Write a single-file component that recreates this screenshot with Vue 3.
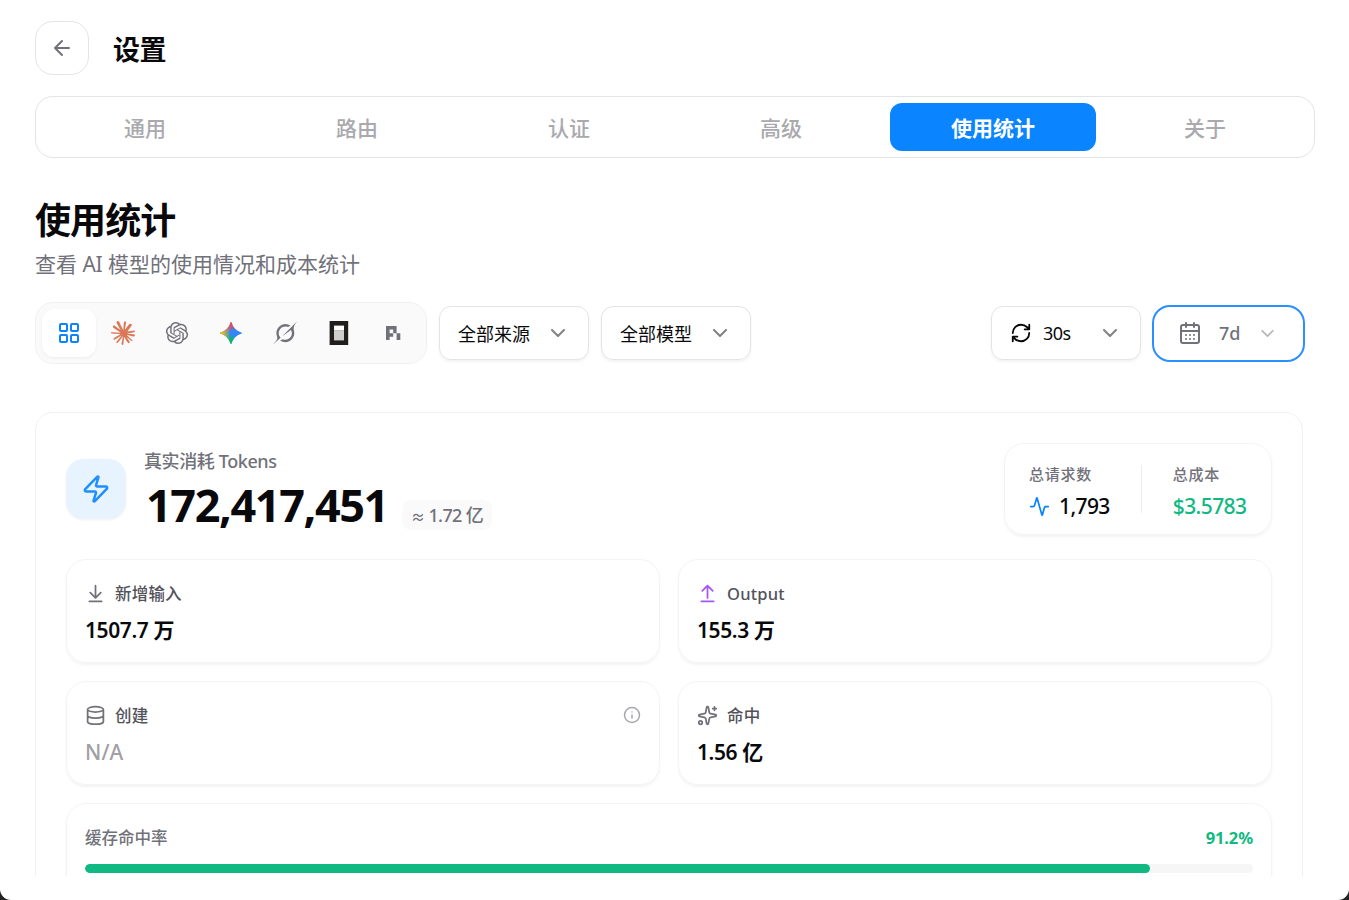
<template>
  <div class="window">
    <header class="header">
      <button class="back">
        <svg class="icon" width="24" height="24" viewBox="0 0 24 24"><path d="m12 19-7-7 7-7M19 12H5" /></svg>
      </button>
      <h1>设置</h1>
    </header>

    <nav class="tabs">
      <button v-for="tab in tabs" :key="tab" class="tab" :class="{ active: tab === activeTab }" @click="activeTab = tab">{{ tab }}</button>
    </nav>

    <main class="content">
      <h2>使用统计</h2>
      <p class="subtitle">查看 <span class="ai">AI</span> 模型的使用情况和成本统计</p>

      <div class="toolbar">
        <div class="apps">
          <button class="app selected">
            <svg class="icon" width="24" height="24" viewBox="0 0 24 24">
              <rect x="3" y="3" width="7" height="7" rx="1" /><rect x="14" y="3" width="7" height="7" rx="1" />
              <rect x="14" y="14" width="7" height="7" rx="1" /><rect x="3" y="14" width="7" height="7" rx="1" />
            </svg>
          </button>
          <button class="app claude">
            <svg width="24" height="24" viewBox="0 0 24 24" fill="currentColor"><path d="M4.709 15.955l4.72-2.647.08-.23-.08-.128H9.2l-.79-.048-2.698-.073-2.339-.097-2.266-.122-.571-.121L0 11.784l.055-.352.48-.321.686.06 1.52.103 2.278.158 1.652.097 2.449.255h.389l.055-.157-.134-.098-.103-.097-2.358-1.596-2.552-1.688-1.336-.972-.724-.491-.364-.462-.158-1.008.656-.722.881.06.225.061.893.686 1.908 1.476 2.491 1.833.365.304.145-.103.019-.073-.164-.274-1.355-2.446-1.446-2.49-.644-1.032-.17-.619a2.97 2.97 0 01-.104-.729L6.283.134 6.696 0l.996.134.42.364.62 1.414 1.002 2.229 1.555 3.03.456.898.243.832.091.255h.158V9.01l.128-1.706.237-2.095.23-2.695.08-.76.376-.91.747-.492.584.28.48.685-.067.444-.286 1.851-.559 2.903-.364 1.942h.212l.243-.242.985-1.306 1.652-2.064.73-.82.85-.904.547-.431h1.033l.76 1.129-.34 1.166-1.064 1.347-.881 1.142-1.264 1.7-.79 1.36.073.11.188-.02 2.856-.606 1.543-.28 1.841-.315.833.388.091.395-.328.807-1.969.486-2.309.462-3.439.813-.042.03.049.061 1.549.146.662.036h1.622l3.02.225.79.522.474.638-.079.485-1.215.62-1.64-.389-3.829-.91-1.312-.329h-.182v.11l1.093 1.068 2.006 1.81 2.509 2.33.127.578-.322.455-.34-.049-2.205-1.657-.851-.747-1.926-1.62h-.128v.17l.444.649 2.345 3.521.122 1.08-.17.353-.608.213-.668-.122-1.374-1.925-1.415-2.167-1.143-1.943-.14.08-.674 7.254-.316.37-.729.28-.607-.461-.322-.747.322-1.476.389-1.924.315-1.53.286-1.9.17-.632-.012-.042-.14.018-1.434 1.967-2.18 2.945-1.726 1.845-.414.164-.717-.37.067-.662.401-.589 2.388-3.036 1.44-1.882.93-1.086-.006-.158h-.055L4.132 18.56l-1.13.146-.487-.456.061-.746.231-.243 1.908-1.312z" /></svg>
          </button>
          <button class="app">
            <svg width="24" height="24" viewBox="0 0 24 24" fill="currentColor"><path d="M21.55 10.004a5.416 5.416 0 00-.478-4.501c-1.217-2.09-3.662-3.166-6.05-2.66A5.59 5.59 0 0010.831 1C8.39.995 6.224 2.546 5.473 4.838A5.553 5.553 0 001.76 7.496a5.487 5.487 0 00.691 6.5 5.416 5.416 0 00.477 4.502c1.217 2.09 3.662 3.165 6.05 2.66A5.586 5.586 0 0013.168 23c2.443.006 4.61-1.546 5.361-3.84a5.553 5.553 0 003.715-2.66 5.488 5.488 0 00-.693-6.497v.001zm-8.381 11.558a4.199 4.199 0 01-2.675-.954c.034-.018.093-.05.132-.074l4.44-2.53a.71.71 0 00.364-.623v-6.176l1.877 1.069c.02.01.033.029.036.05v5.115c-.003 2.274-1.87 4.118-4.174 4.123zM4.192 17.78a4.059 4.059 0 01-.498-2.763c.032.02.09.055.131.078l4.44 2.53c.225.13.504.13.73 0l5.42-3.088v2.138a.068.068 0 01-.027.057L9.9 19.288c-1.999 1.136-4.552.46-5.707-1.51h-.001zM3.023 8.216A4.15 4.15 0 015.198 6.41l-.002.151v5.06a.711.711 0 00.364.624l5.42 3.087-1.876 1.07a.067.067 0 01-.063.005l-4.489-2.559c-1.995-1.14-2.679-3.658-1.53-5.63h.001zm15.417 3.54l-5.42-3.088L14.896 7.6a.067.067 0 01.063-.006l4.489 2.557c1.998 1.14 2.683 3.662 1.529 5.633a4.163 4.163 0 01-2.174 1.807V12.38a.71.71 0 00-.363-.623zm1.867-2.773a6.04 6.04 0 00-.132-.078l-4.44-2.53a.731.731 0 00-.729 0l-5.42 3.088V7.325a.068.068 0 01.027-.057L14.1 4.713c2-1.137 4.555-.46 5.707 1.513.487.833.664 1.809.499 2.757h.001zm-11.741 3.81l-1.877-1.068a.065.065 0 01-.036-.051V6.559c.001-2.277 1.873-4.122 4.181-4.12.976 0 1.92.338 2.671.954-.034.018-.092.05-.131.073l-4.44 2.53a.71.71 0 00-.365.623l-.003 6.173v.002zm1.02-2.168L12 9.25l2.414 1.375v2.75L12 14.75l-2.415-1.375v-2.75z" /></svg>
          </button>
          <button class="app">
            <svg width="24" height="24" viewBox="0 0 24 24">
              <defs>
                <linearGradient id="gem-red" gradientUnits="userSpaceOnUse" x1="11" y1="2" x2="13" y2="10.5"><stop offset=".2" stop-color="#f94543" /><stop offset="1" stop-color="#f94543" stop-opacity="0" /></linearGradient>
                <linearGradient id="gem-yellow" gradientUnits="userSpaceOnUse" x1="1" y1="12" x2="11.5" y2="12"><stop offset=".2" stop-color="#fabc12" /><stop offset="1" stop-color="#fabc12" stop-opacity="0" /></linearGradient>
                <linearGradient id="gem-green" gradientUnits="userSpaceOnUse" x1="10" y1="21" x2="12.5" y2="12.5"><stop offset=".2" stop-color="#08b962" /><stop offset="1" stop-color="#08b962" stop-opacity="0" /></linearGradient>
              </defs>
              <path v-for="fill in geminiFills" :key="fill" :fill="fill" d="M20.616 10.835a14.147 14.147 0 01-4.45-3.001 14.111 14.111 0 01-3.678-6.452.503.503 0 00-.975 0 14.134 14.134 0 01-3.679 6.452 14.155 14.155 0 01-4.45 3.001c-.65.28-1.318.505-2.002.678a.502.502 0 000 .975c.684.172 1.35.397 2.002.677a14.147 14.147 0 014.45 3.001 14.112 14.112 0 013.679 6.453.502.502 0 00.975 0c.172-.685.397-1.351.677-2.003a14.145 14.145 0 013.001-4.45 14.113 14.113 0 016.453-3.678.503.503 0 000-.975 13.245 13.245 0 01-2.003-.678z" />
            </svg>
          </button>
          <button class="app">
            <svg width="24" height="24" viewBox="0 0 24 24" fill="currentColor"><path d="M9.27 15.29l7.978-5.897c.391-.29.95-.177 1.137.272.98 2.369.542 5.215-1.41 7.169-1.951 1.954-4.667 2.382-7.149 1.406l-2.711 1.257c3.889 2.661 8.611 2.003 11.562-.953 2.341-2.344 3.066-5.539 2.388-8.42l.006.007c-.983-4.232.242-5.924 2.75-9.383.06-.082.12-.164.179-.248l-3.301 3.305v-.01L9.267 15.292M7.623 16.723c-2.792-2.67-2.31-6.801.071-9.184 1.761-1.763 4.647-2.483 7.166-1.425l2.705-1.25a7.808 7.808 0 00-1.829-1A8.975 8.975 0 005.984 5.83c-2.533 2.536-3.33 6.436-1.962 9.764 1.022 2.487-.653 4.246-2.34 6.022-.599.63-1.199 1.259-1.682 1.925l7.62-6.815" /></svg>
          </button>
          <button class="app">
            <svg width="24" height="24" viewBox="0 0 24 24">
              <path fill="#211e1e" d="M2.6 0h18.6v24H2.6z" /><path fill="#fff" d="M7 4.6h10v5H7z" /><path fill="#cfcecd" d="M7 9.4h10v10H7z" />
            </svg>
          </button>
          <button class="app">
            <svg width="24" height="24" viewBox="0 0 24 24" fill="currentColor">
              <path fill-rule="evenodd" d="M5 5h10.6v7.2h-3.4v3.5H8.6v3.4H5zM8.6 8.5v3.7h3.6V8.5zM15.6 12.2h3.7v6.9h-3.7z" />
            </svg>
          </button>
        </div>

        <button v-for="name in ['全部来源', '全部模型']" :key="name" class="select">
          {{ name }}
          <svg class="icon faded" width="24" height="24" viewBox="0 0 24 24"><path d="m6 9 6 6 6-6" /></svg>
        </button>

        <div class="right">
          <button class="select">
            <span class="interval">
              <svg class="icon" width="22" height="22" viewBox="0 0 24 24"><path d="M3 12a9 9 0 0 1 9-9 9.75 9.75 0 0 1 6.74 2.74L21 8M21 3v5h-5M21 12a9 9 0 0 1-9 9 9.75 9.75 0 0 1-6.74-2.74L3 16M8 16H3v5" /></svg>
              30s
            </span>
            <svg class="icon faded" width="24" height="24" viewBox="0 0 24 24"><path d="m6 9 6 6 6-6" /></svg>
          </button>
          <button class="range">
            <svg class="icon" width="24" height="24" viewBox="0 0 24 24"><path d="M8 2v4M16 2v4M3 10h18M8 14h.01M12 14h.01M16 14h.01M8 18h.01M12 18h.01M16 18h.01" /><rect width="18" height="18" x="3" y="4" rx="2" /></svg>
            <span>7d</span>
            <svg class="icon faded" width="21" height="21" viewBox="0 0 24 24"><path d="m6 9 6 6 6-6" /></svg>
          </button>
        </div>
      </div>

      <section class="hero">
        <div class="hero-top">
          <div class="zap">
            <svg class="icon" width="30" height="30" viewBox="0 0 24 24"><path d="M4 14a1 1 0 0 1-.78-1.63l9.9-10.2a.5.5 0 0 1 .86.46l-1.92 6.02A1 1 0 0 0 13 10h7a1 1 0 0 1 .78 1.63l-9.9 10.2a.5.5 0 0 1-.86-.46l1.92-6.02A1 1 0 0 0 11 14z" /></svg>
          </div>
          <div class="total">
            <div class="total-label">真实消耗 Tokens</div>
            <div class="total-row">
              <span class="total-value">172,417,451</span>
              <span class="approx"><small>≈</small> 1.72 亿</span>
            </div>
          </div>
          <div class="summary">
            <div class="summary-item">
              <div class="summary-label">总请求数</div>
              <div class="summary-value">
                <svg class="icon" width="21" height="21" viewBox="0 0 24 24"><path d="M22 12h-2.48a2 2 0 0 0-1.93 1.46l-2.35 8.36a.25.25 0 0 1-.48 0L9.24 2.18a.25.25 0 0 0-.48 0l-2.35 8.36A2 2 0 0 1 4.49 12H2" /></svg>
                1,793
              </div>
            </div>
            <div class="divider"></div>
            <div class="summary-item">
              <div class="summary-label">总成本</div>
              <div class="summary-value cost">$3.5783</div>
            </div>
          </div>
        </div>

        <div class="stats">
          <div v-for="stat in stats" :key="stat.label" class="card">
            <div class="card-label">
              <svg class="icon" :class="stat.tone" width="21" height="21" viewBox="0 0 24 24"><path :d="stat.icon" /></svg>
              {{ stat.label }}
              <svg v-if="stat.info" class="icon info" width="18" height="18" viewBox="0 0 24 24"><circle cx="12" cy="12" r="10" /><path d="M12 16v-4M12 8h.01" /></svg>
            </div>
            <div class="card-value" :class="{ muted: stat.info }">{{ stat.value }}</div>
          </div>
        </div>

        <div class="card cache">
          <div class="cache-row">
            <span>缓存命中率</span>
            <span class="rate">{{ hitRate }}%</span>
          </div>
          <div class="track"><div class="fill" :style="{ width: hitRate + '%' }"></div></div>
        </div>
      </section>
    </main>
  </div>
</template>

<script setup>
import { ref } from 'vue';

const tabs = ['通用', '路由', '认证', '高级', '使用统计', '关于'];
const activeTab = ref('使用统计');
const hitRate = ref(91.2);

// base colour first, then the tinted arms of the star
const geminiFills = ['#3186ff', 'url(#gem-green)', 'url(#gem-red)', 'url(#gem-yellow)'];

const stats = [
  { label: '新增输入', value: '1507.7 万', icon: 'M12 17V3M6 11l6 6 6-6M19 21H5' },
  { label: 'Output', value: '155.3 万', tone: 'purple', icon: 'm18 9-6-6-6 6M12 3v14M5 21h14' },
  { label: '创建', value: 'N/A', info: true, icon: 'M3 5a9 3 0 1 0 18 0a9 3 0 1 0-18 0M3 5v14a9 3 0 0 0 18 0V5M3 12a9 3 0 0 0 18 0' },
  { label: '命中', value: '1.56 亿', icon: 'M11.017 2.814a1 1 0 0 1 1.966 0l1.051 5.558a2 2 0 0 0 1.594 1.594l5.558 1.051a1 1 0 0 1 0 1.966l-5.558 1.051a2 2 0 0 0-1.594 1.594l-1.051 5.558a1 1 0 0 1-1.966 0l-1.051-5.558a2 2 0 0 0-1.594-1.594l-5.558-1.051a1 1 0 0 1 0-1.966l5.558-1.051a2 2 0 0 0 1.594-1.594zM20 2v4M22 4h-4M2 20a2 2 0 1 0 4 0a2 2 0 1 0-4 0' },
];
</script>

<style>
body {
  margin: 0;
  background: #222;
}
</style>

<style scoped>
.window {
  box-sizing: border-box;
  height: 900px;
  padding: 21px 34px 24px 35px;
  display: flex;
  flex-direction: column;
  overflow: hidden;
  background: #fff;
  border-radius: 0 0 11px 11px;
  color: #09090b;
  font-family: "Noto Sans", "Noto Sans CJK SC", sans-serif;
}
.window * {
  box-sizing: border-box;
}
button {
  padding: 0;
  border: 0;
  background: none;
  color: inherit;
  font-family: inherit;
  cursor: pointer;
}
svg {
  display: block;
  flex-shrink: 0;
}
.icon {
  fill: none;
  stroke: currentColor;
  stroke-width: 2;
  stroke-linecap: round;
  stroke-linejoin: round;
}
.faded {
  opacity: 0.5;
}
.header {
  display: flex;
  align-items: center;
  gap: 24px;
  height: 54px;
  flex-shrink: 0;
}
.back {
  width: 54px;
  height: 54px;
  display: flex;
  align-items: center;
  justify-content: center;
  border: 1px solid #e4e4e7;
  border-radius: 18px;
  color: #71717a;
}
h1 {
  margin: 3px 0 0;
  font-size: 27px;
  line-height: 42px;
  font-weight: 600;
  letter-spacing: -0.5px;
}
.tabs {
  display: grid;
  grid-template-columns: repeat(6, 1fr);
  gap: 6px;
  height: 62px;
  flex-shrink: 0;
  margin-top: 21px;
  padding: 6px;
  border: 1px solid #e4e4e7;
  border-radius: 18px;
}
.tab {
  height: 48px;
  border-radius: 12px;
  font-size: 21px;
  font-weight: 500;
  color: #a9a9ae;
}
.tab.active {
  background: #0a84ff;
  color: #fff;
  font-weight: 600;
}
.content {
  flex: 1;
  min-height: 0;
  overflow: hidden;
  padding: 39px 12px 0 0;
}
h2 {
  margin: 0;
  font-size: 36px;
  line-height: 48px;
  font-weight: 700;
  letter-spacing: -0.9px;
}
.subtitle {
  margin: 4px 0 0;
  font-size: 21px;
  line-height: 30px;
  color: #71717a;
}
.ai {
  letter-spacing: -0.3px;
}
.toolbar {
  display: flex;
  align-items: center;
  gap: 12px;
  margin: 23px -2px 0 0;
  height: 62px;
}
.apps {
  display: flex;
  width: 392px;
  height: 62px;
  padding: 6px;
  border: 1px solid #f1f1f2;
  border-radius: 18px;
  background: #fafafa;
}
.app {
  width: 54px;
  height: 48px;
  display: flex;
  align-items: center;
  justify-content: center;
  border-radius: 12px;
  color: #71717a;
}
.app.selected {
  background: #fff;
  color: #0a84ff;
  box-shadow: 0 1px 3px rgba(0, 0, 0, 0.06);
}
.app.claude {
  color: #d97757;
}
.select {
  display: flex;
  align-items: center;
  justify-content: space-between;
  width: 150px;
  height: 54px;
  padding: 0 18px;
  border: 1px solid #e4e4e7;
  border-radius: 12px;
  box-shadow: 0 2px 3px rgba(0, 0, 0, 0.05);
  font-size: 18px;
}
.right {
  display: flex;
  align-items: center;
  gap: 11px;
  margin-left: auto;
}
.interval {
  display: flex;
  align-items: center;
  gap: 11px;
  letter-spacing: -0.5px;
}
.range {
  display: flex;
  align-items: center;
  width: 153px;
  height: 57px;
  padding: 0 24px;
  border: 2px solid #2a8fff;
  border-radius: 18px;
  color: #71717a;
  font-size: 18px;
  font-weight: 500;
}
.range span {
  margin: 0 17px;
}
.hero {
  width: 1268px;
  margin-top: 48px;
  padding: 30px;
  border: 1px solid #f1f1f2;
  border-radius: 18px;
}
.hero-top {
  display: flex;
  align-items: center;
  height: 92px;
}
.zap {
  width: 60px;
  height: 60px;
  margin-bottom: 1px;
  display: flex;
  align-items: center;
  justify-content: center;
  border-radius: 18px;
  background: #e7f3ff;
  color: #1f8fff;
  box-shadow: 0 1px 3px rgba(0, 0, 0, 0.06);
}
.total {
  margin: 6px 0 0 18px;
}
.total-label {
  font-size: 18px;
  line-height: 24px;
  font-weight: 500;
  color: #71717a;
  letter-spacing: -0.4px;
}
.total-row {
  display: flex;
  align-items: flex-end;
  height: 62px;
}
.total-value {
  margin-left: 2px;
  font-size: 45px;
  line-height: 60px;
  font-weight: 700;
  letter-spacing: -1.4px;
}
.approx {
  height: 30px;
  margin: 0 0 5px 14px;
  padding: 0 9px;
  border-radius: 9px;
  background: #fafafa;
  color: #71717a;
  font-size: 18px;
  line-height: 30px;
  font-weight: 500;
  letter-spacing: -0.6px;
}
.approx small {
  font-size: 14px;
}
.summary {
  display: flex;
  align-items: center;
  margin-left: auto;
  width: 268px;
  height: 92px;
  padding: 6px 24px 0;
  border: 1px solid #f4f4f5;
  border-radius: 20px;
  box-shadow: 0 2px 3px rgba(0, 0, 0, 0.05);
}
.summary-label {
  font-size: 15px;
  line-height: 23px;
  font-weight: 500;
  letter-spacing: 0.75px;
  color: #71717a;
}
.summary-value {
  display: flex;
  align-items: center;
  gap: 9px;
  margin-top: 5px;
  font-size: 21px;
  line-height: 30px;
  font-weight: 500;
  letter-spacing: -0.6px;
}
.summary-value svg {
  color: #0a84ff;
}
.summary-value.cost {
  color: #10b981;
}
.divider {
  width: 1px;
  height: 48px;
  margin: 0 31px 6px;
  background: #ededee;
}
.stats {
  display: grid;
  grid-template-columns: 1fr 1fr;
  gap: 18px;
  margin: 24px 0 18px;
}
.card {
  height: 104px;
  padding: 19px 18px;
  border: 1px solid #f4f4f5;
  border-radius: 20px;
  box-shadow: 0 2px 3px rgba(0, 0, 0, 0.05);
}
.card-label {
  display: flex;
  align-items: center;
  gap: 9px;
  height: 28px;
  font-size: 16.5px;
  font-weight: 500;
  color: #52525b;
  letter-spacing: 0.2px;
}
.card-label svg {
  color: #71717a;
}
.card-label svg.purple {
  color: #a855f7;
}
.card-label svg.info {
  margin-left: auto;
  color: #a9a9ae;
}
.card-value {
  margin-top: 8px;
  font-size: 21px;
  line-height: 30px;
  font-weight: 600;
  letter-spacing: -0.4px;
}
.card-value.muted {
  color: #a0a0a5;
  font-weight: 500;
  letter-spacing: 0.1px;
}
.cache-row {
  display: flex;
  justify-content: space-between;
  align-items: center;
  height: 28px;
  font-size: 16.5px;
  font-weight: 500;
  color: #71717a;
}
.rate {
  color: #10b981;
  font-weight: 700;
  letter-spacing: -0.1px;
}
.track {
  height: 9px;
  margin-top: 13px;
  border-radius: 5px;
  background: #f6f6f7;
  overflow: hidden;
}
.fill {
  height: 100%;
  border-radius: 5px;
  background: #10b981;
}
</style>
